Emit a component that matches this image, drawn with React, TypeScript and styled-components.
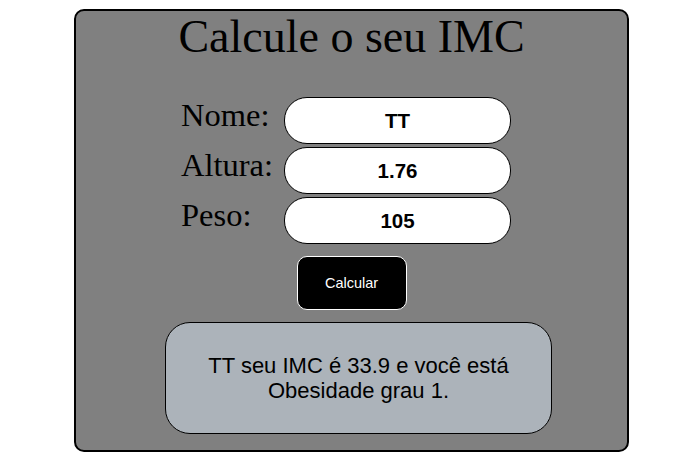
import React from "react";
import styled, { createGlobalStyle } from "styled-components";

const GlobalStyle = createGlobalStyle`
  html, body {
    margin: 0;
    padding: 0;
    background: #ffffff;
  }
  * { box-sizing: border-box; }
`;

const Card = styled.div`
  margin: 9px 0 0 74px;
  width: 555px;
  height: 443px;
  background: #808080;
  border: 2px solid #000;
  border-radius: 10px;
  display: flex;
  flex-direction: column;
  align-items: center;
`;

const Title = styled.h1`
  margin: 0;
  font-family: "Liberation Serif", "Times New Roman", serif;
  font-weight: normal;
  font-size: 46px;
  line-height: 52px;
  color: #000;
`;

const Form = styled.div`
  align-self: flex-start;
  margin: 34px 0 0 105px;
  display: grid;
  grid-template-columns: 103px 227px;
  grid-auto-rows: 47px;
  row-gap: 3px;
`;

const Label = styled.label`
  font-family: "Liberation Serif", "Times New Roman", serif;
  font-size: 32.5px;
  line-height: normal;
  color: #000;
  align-self: start;
`;

const Field = styled.input`
  width: 227px;
  height: 47px;
  border: 1px solid #000;
  border-radius: 23px;
  background: #fff;
  font-family: "Liberation Sans", Arial, sans-serif;
  font-weight: bold;
  font-size: 20.5px;
  text-align: center;
  color: #000;
  outline: none;
  padding: 0 10px;
`;

const Button = styled.button`
  margin-top: 12px;
  width: 110px;
  height: 54px;
  background: #000;
  color: #fff;
  border: 1px solid #fff;
  border-radius: 10px;
  font-family: "Liberation Sans", Arial, sans-serif;
  font-size: 14.5px;
  cursor: pointer;
`;

const Result = styled.div`
  align-self: flex-start;
  margin: 12px 0 0 89px;
  width: 387px;
  height: 112px;
  background: #acb3ba;
  border: 1px solid #000;
  border-radius: 25px;
  display: flex;
  align-items: center;
  justify-content: center;
  text-align: center;
  padding: 0 40px;
  font-family: "Liberation Sans", Arial, sans-serif;
  font-size: 22px;
  line-height: 25px;
  color: #000;
`;

export default function App() {
  return (
    <>
      <GlobalStyle />
      <Card>
        <Title>Calcule o seu IMC</Title>
        <Form>
          <Label>Nome:</Label>
          <Field defaultValue="TT" />
          <Label>Altura:</Label>
          <Field defaultValue="1.76" />
          <Label>Peso:</Label>
          <Field defaultValue="105" />
        </Form>
        <Button>Calcular</Button>
        <Result>TT seu IMC é 33.9 e você está Obesidade grau 1.</Result>
      </Card>
    </>
  );
}
